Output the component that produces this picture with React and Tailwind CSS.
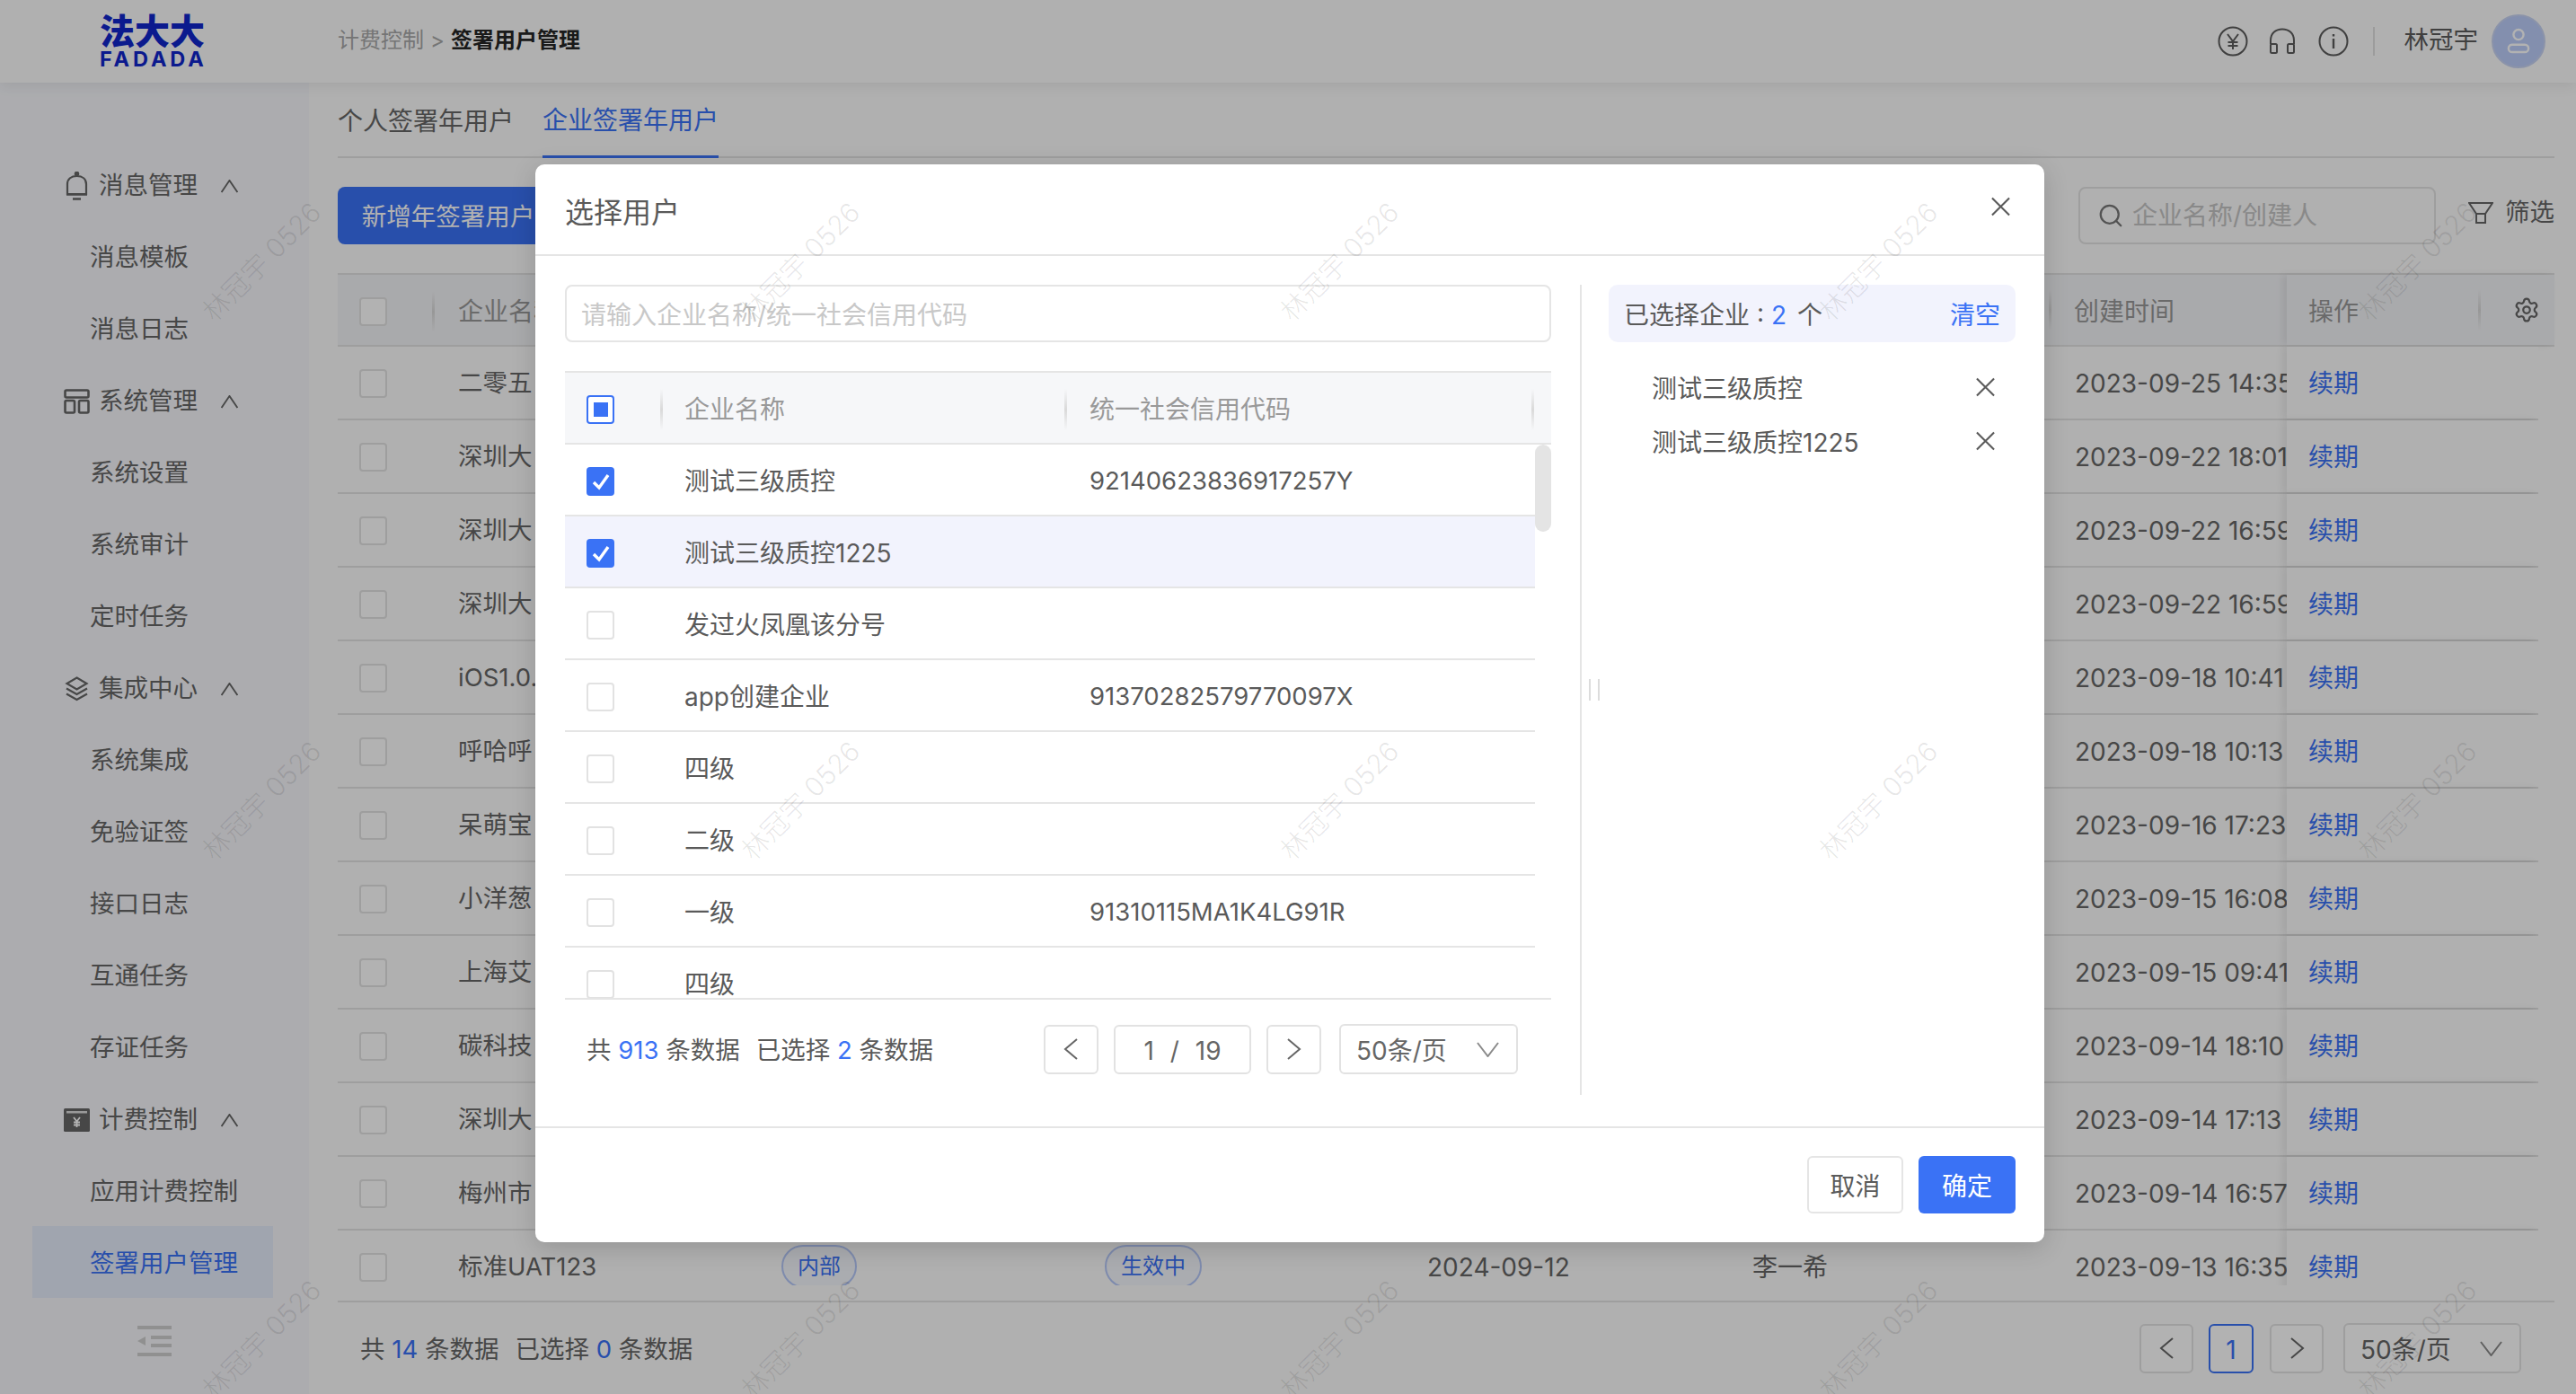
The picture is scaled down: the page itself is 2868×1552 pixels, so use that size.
import { Search, Settings } from "lucide-react";

const menu = [
  { label: "消息管理", icon: "bell", children: ["消息模板", "消息日志"] },
  { label: "系统管理", icon: "system", children: ["系统设置", "系统审计", "定时任务"] },
  { label: "集成中心", icon: "layers", children: ["系统集成", "免验证签", "接口日志", "互通任务", "存证任务"] },
  { label: "计费控制", icon: "bill", children: ["应用计费控制", "签署用户管理"] },
];

const rows = [
  { name: "二零五", time: "2023-09-25 14:35" },
  { name: "深圳大", time: "2023-09-22 18:01" },
  { name: "深圳大", time: "2023-09-22 16:59" },
  { name: "深圳大", time: "2023-09-22 16:59" },
  { name: "iOS1.0.", time: "2023-09-18 10:41" },
  { name: "呼哈呼", time: "2023-09-18 10:13" },
  { name: "呆萌宝", time: "2023-09-16 17:23" },
  { name: "小洋葱", time: "2023-09-15 16:08" },
  { name: "上海艾", time: "2023-09-15 09:41" },
  { name: "碳科技", time: "2023-09-14 18:10" },
  { name: "深圳大", time: "2023-09-14 17:13" },
  { name: "梅州市", time: "2023-09-14 16:57" },
  { name: "标准UAT123", type: "内部", status: "生效中", date: "2024-09-12", owner: "李一希", time: "2023-09-13 16:35" },
];

const companies = [
  { name: "测试三级质控", code: "92140623836917257Y", checked: true },
  { name: "测试三级质控1225", code: "", checked: true, active: true },
  { name: "发过火凤凰该分号", code: "" },
  { name: "app创建企业", code: "91370282579770097X" },
  { name: "四级", code: "" },
  { name: "二级", code: "" },
  { name: "一级", code: "91310115MA1K4LG91R" },
  { name: "四级", code: "" },
];

const watermarks = Array.from({ length: 15 }, (_, i) => i);

function MenuIcon({ type }) {
  if (type === "bell") {
    return (
      <svg viewBox="0 0 29 32" className="w-[29px] h-[32px]" fill="none" stroke="#666" strokeWidth="2.4">
        <circle cx="14.5" cy="2.5" r="1.6" fill="#666" />
        <path d="M4 25V14c0-6 4.5-9 10.500-9S25 8 25 14v11z" strokeWidth="2.2" />
        <path d="M3 25.500h23M10 30.500h9" />
      </svg>
    );
  }
  if (type === "system") {
    return (
      <svg viewBox="0 0 29 28" className="w-[29px] h-[28px]" fill="none" stroke="#666" strokeWidth="2.6">
        <rect x="1.500" y="1.500" width="26" height="8" rx="1.500" />
        <rect x="1.500" y="13" width="10.500" height="13.500" rx="1.500" />
        <rect x="17" y="13" width="10.500" height="13.500" rx="1.500" />
      </svg>
    );
  }
  if (type === "layers") {
    return (
      <svg viewBox="0 0 29 28" className="w-[29px] h-[28px]" fill="none" stroke="#666" strokeWidth="2.2">
        <path d="M14.500 1.500 25.500 8l-11 6.500L3.500 8z" />
        <path d="M3 13.500 14.500 20 26 13.500M3 19.500 14.500 26 26 19.500" />
      </svg>
    );
  }
  return (
    <svg viewBox="0 0 29 26" className="w-[29px] h-[26px]">
      <rect width="29" height="26" rx="1.500" fill="#666" />
      <rect x="3" y="3" width="23" height="2.500" fill="#ddd" />
      <path d="M11 10l3.500 4.500L18 10M14.500 14.500V21M11 15.500h7M11 18.500h7" fill="none" stroke="#fff" strokeWidth="1.800" />
    </svg>
  );
}

function Chevron({ dir, className }) {
  const paths = {
    up: "M1 15 10.500 1 20 15",
    down: "M1 1 12.500 16 24 1",
    left: "M15 1 2 12l13 11",
    right: "M2 1l13 11L2 23",
  };
  const size = { up: "0 0 21 16", down: "0 0 25 17", left: "0 0 17 24", right: "0 0 17 24" };
  return (
    <svg viewBox={size[dir]} className={className} fill="none" stroke="currentColor" strokeWidth="2">
      <path d={paths[dir]} />
    </svg>
  );
}

function CloseX({ className }) {
  return (
    <svg viewBox="0 0 22 22" className={className} fill="none" stroke="currentColor" strokeWidth="2.2">
      <path d="M1 1l20 20M21 1 1 21" />
    </svg>
  );
}

function Checkbox({ state }) {
  if (state === "checked") {
    return (
      <span className="flex w-[31px] h-[32px] items-center justify-center rounded-[4px] bg-[#3a72f5]">
        <svg viewBox="0 0 20 20" className="w-[20px] h-[20px]" fill="none" stroke="#fff" strokeWidth="3.400">
          <path d="M2 11l6 6L18 3" />
        </svg>
      </span>
    );
  }
  if (state === "half") {
    return (
      <span className="flex w-[31px] h-[32px] items-center justify-center rounded-[4px] border-2 border-[#3a72f5] bg-white">
        <span className="w-[16px] h-[16px] bg-[#3a72f5]" />
      </span>
    );
  }
  return <span className="block w-[31px] h-[32px] rounded-[4px] border-2 border-[#e2e2e2] bg-white" />;
}

function HeadDivider() {
  return <span className="w-[3px] h-[46px] bg-linear-to-b from-transparent via-[#d9d9d9] to-transparent" />;
}

function Sidebar() {
  return (
    <aside className="flex w-[344px] flex-col bg-[#f6f7fb] pt-[73px] text-[27.5px]">
      <div className="flex w-[268px] flex-col ml-[36px] text-[#666]">
        {menu.map((group) => (
          <div key={group.label}>
            <div className="flex h-[80px] items-center pl-[35px] pt-[4px]">
              <span className="flex w-[29px] justify-center mr-[10px]">
                <MenuIcon type={group.icon} />
              </span>
              <span>{group.label}</span>
              <Chevron dir="up" className="w-[21px] h-[15px] ml-[25px]" />
            </div>
            {group.children.map((child) => (
              <div
                key={child}
                className={`flex h-[80px] items-center pl-[64px] pt-[4px] ${
                  child === "签署用户管理" ? "bg-[#e6ecfb] text-[#3a72f5]" : ""
                }`}
              >
                {child}
              </div>
            ))}
          </div>
        ))}
      </div>
      <div className="flex justify-center mt-[31px]">
        <svg viewBox="0 0 38 34" className="w-[38px] h-[34px]" fill="#cfcfcf">
          <rect width="38" height="4" />
          <rect x="15" y="11" width="23" height="4" />
          <rect x="15" y="20" width="23" height="4" />
          <rect y="30" width="38" height="4" />
          <path d="M9 12v10l-9-5z" />
        </svg>
      </div>
    </aside>
  );
}

function TopBar() {
  return (
    <header className="relative z-10 flex h-[92px] items-center bg-[#fcfcfc] shadow-[0_4px_14px_rgba(0,0,0,0.07)]">
      <div className="flex w-[376px] flex-col pl-[111px] text-[#1026cc]">
        <span className="text-[39px] leading-[36px] font-black">法大大</span>
        <span className="mt-[4px] text-[23.5px] leading-[18px] font-bold tracking-[3.9px]">FADADA</span>
      </div>
      <div className="flex flex-1 items-center gap-[7px] pb-[3px] text-[24px]">
        <span className="text-[#a8a8a8]">计费控制</span>
        <span className="text-[#a8a8a8]">&gt;</span>
        <span className="font-bold text-[#262626]">签署用户管理</span>
      </div>
      <div className="flex items-center pr-[34px] text-[#5c5c5c]">
        <svg viewBox="0 0 34 34" className="w-[34px] h-[34px]" fill="none" stroke="#5c5c5c" strokeWidth="2">
          <circle cx="17" cy="17" r="15.500" />
          <path d="M11 9l6 8 6-8M17 17v9M11.500 18h11M11.500 22h11" />
        </svg>
        <svg viewBox="0 0 30 30" className="w-[30px] h-[30px] ml-[23px]" fill="none" stroke="#5c5c5c" strokeWidth="2">
          <path d="M2 18v-4C2 6 7.500 1.500 15 1.500S28 6 28 14v4" />
          <rect x="2" y="18" width="7" height="10" rx="1.500" />
          <rect x="21" y="18" width="7" height="10" rx="1.500" />
        </svg>
        <svg viewBox="0 0 34 34" className="w-[34px] h-[34px] ml-[25px]" fill="none" stroke="#5c5c5c" strokeWidth="2">
          <circle cx="17" cy="17" r="15.500" />
          <path d="M17 14v11M17 9v2.500" strokeWidth="2.400" />
        </svg>
        <span className="w-[2px] h-[32px] bg-[#e0e0e0] ml-[27px] mr-[33px]" />
        <span className="pb-[3px] text-[27.5px] text-[#5c5c5c]">林冠宇</span>
        <span className="flex w-[60px] h-[60px] items-center justify-center rounded-full bg-[#bccdfa] border-2 border-[#c7d3f3] ml-[15px]">
          <svg viewBox="0 0 28 32" className="w-[26px] h-[30px]" fill="none" stroke="#fff" strokeWidth="2.600">
            <circle cx="14" cy="8" r="6" />
            <rect x="2" y="20" width="24" height="9" rx="4.500" />
          </svg>
        </span>
      </div>
    </header>
  );
}

function PagerButton({ children, className = "" }) {
  return (
    <span
      className={`flex h-[55px] items-center justify-center rounded-[6px] border-2 border-[#e2e2e2] bg-white text-[#666] ${className}`}
    >
      {children}
    </span>
  );
}

function PageSize({ width }) {
  return (
    <span className={`flex h-[56px] ${width} items-center justify-between rounded-[6px] border-2 border-[#e2e2e2] bg-white pl-[17px] pr-[19px] text-[#666]`}>
      <span className="pt-[3px]">50条/页</span>
      <Chevron dir="down" className="w-[25px] h-[17px] text-[#8a8a8a]" />
    </span>
  );
}

function Summary({ total, selected }) {
  return (
    <div className="whitespace-pre pt-[4px] text-[27.5px]">
      共 <span className="text-[#3a72f5]">{total}</span> 条数据<span className="ml-[18px]">已选择 </span>
      <span className="text-[#3a72f5]">{selected}</span> 条数据
    </div>
  );
}

function MainTable() {
  return (
    <>
      <div className="flex h-[82px] items-center border-y-2 border-[#e2e2e2] bg-[#f3f4f7] text-[#999]">
        <div className="flex w-[108px] items-center justify-between pl-[24px] pt-[4px]">
          <Checkbox />
          <HeadDivider />
        </div>
        <div className="flex-1 pl-[26px] pt-[4px]">企业名称</div>
        <HeadDivider />
        <div className="w-[262px] pl-[25px] pt-[4px]">创建时间</div>
        <div className="flex w-[298px] self-stretch items-center bg-[#f3f4f7] pl-[24px] shadow-[-5px_0_8px_rgba(0,0,0,0.07)]">
          <span className="w-[189px] pt-[4px]">操作</span>
          <HeadDivider />
          <Settings className="ml-[36px] w-[30px] h-[30px] text-[#666]" strokeWidth={1.8} />
        </div>
      </div>
      <div className="h-[1064px] border-b-2 border-[#e2e2e2]">
        <div className="h-[1045px] w-[2450px] overflow-hidden text-[#666]">
          {rows.map((row, i) => (
            <div key={i} className="flex h-[82px] items-center border-b-2 border-[#e2e2e2]">
              <div className="w-[108px] pl-[24px] pt-[2px]">
                <Checkbox />
              </div>
              <div className="w-[359px] pl-[26px] pt-[2px] text-[27.5px]">{row.name}</div>
              <div className="w-[360px] pl-[27px]">
                {row.type && (
                  <span className="flex h-[48px] w-[84px] items-center justify-center rounded-full border-2 border-[#b5c8f8] bg-[#f4f6fd] text-[24px] text-[#3a72f5]">
                    {row.type}
                  </span>
                )}
              </div>
              <div className="w-[359px] pl-[27px]">
                {row.status && (
                  <span className="flex h-[48px] w-[108px] items-center justify-center rounded-full border-2 border-[#b5c8f8] bg-[#f4f6fd] text-[24px] text-[#3a72f5]">
                    {row.status}
                  </span>
                )}
              </div>
              <div className="w-[362px] pl-[27px] pt-[2px]">{row.date}</div>
              <div className="w-[360px] pl-[27px] pt-[2px]">{row.owner}</div>
              <div className="w-[262px] overflow-hidden whitespace-nowrap pl-[26px] pt-[2px]">{row.time}</div>
              <div className="flex h-[80px] w-[280px] self-start items-center bg-[#fcfcfc] pl-[24px] pt-[2px] text-[#3a72f5] shadow-[-5px_0_8px_rgba(0,0,0,0.07)]">
                续期
              </div>
            </div>
          ))}
        </div>
      </div>
    </>
  );
}

function MainContent() {
  return (
    <main className="flex w-[2468px] flex-col ml-[32px]">
      <div className="flex h-[84px] gap-[32px] border-b-2 border-[#e2e2e2]">
        <span className="flex h-[84px] items-center text-[#666] pt-[2px]">个人签署年用户</span>
        <span className="flex h-[84px] items-center border-b-[3px] border-[#3a72f5] text-[#3a72f5] pt-[2px]">企业签署年用户</span>
      </div>
      <div className="flex h-[64px] items-center mt-[32px] mb-[32px]">
        <span className="flex h-[64px] w-[246px] items-center justify-center rounded-[8px] bg-[#3a72f5] pt-[4px] text-[27.5px] text-white">
          新增年签署用户
        </span>
        <div className="flex-1" />
        <div className="flex h-[64px] w-[398px] items-center rounded-[8px] border-2 border-[#e2e2e2] pl-[19px]">
          <Search className="w-[30px] h-[30px] text-[#777]" strokeWidth={1.8} />
          <span className="ml-[9px] text-[#c4c4c4]">企业名称/创建人</span>
        </div>
        <svg viewBox="0 0 28 24" className="w-[28px] h-[24px] ml-[36px] mb-[6px]" fill="none" stroke="#666" strokeWidth="2">
          <path d="M1 1h26L19 13H9z" />
          <path d="M9 13h10v10H9z" />
        </svg>
        <span className="ml-[13px] mb-[6px] w-[55px] whitespace-nowrap text-[27.5px] text-[#666]">筛选</span>
      </div>
      <MainTable />
      <div className="flex flex-1 items-center justify-between pl-[25px] pr-[37px] text-[#666]">
        <Summary total="14" selected="0" />
        <div className="flex items-center">
          <PagerButton className="w-[60px]">
            <Chevron dir="left" className="w-[17px] h-[24px]" />
          </PagerButton>
          <span className="flex h-[55px] w-[50px] items-center justify-center rounded-[6px] border-2 border-[#3a72f5] bg-white pt-[3px] text-[#3a72f5] ml-[17px]">
            1
          </span>
          <PagerButton className="w-[60px] ml-[18px]">
            <Chevron dir="right" className="w-[17px] h-[24px]" />
          </PagerButton>
          <span className="ml-[22px]">
            <PageSize width="w-[198px]" />
          </span>
        </div>
      </div>
    </main>
  );
}

function SelectUserModal() {
  return (
    <div className="absolute left-[596px] top-[183px] flex h-[1200px] w-[1680px] flex-col rounded-[10px] bg-white text-[#5a5a5a] shadow-[0_6px_28px_rgba(0,0,0,0.16)]">
      <div className="flex h-[102px] shrink-0 items-center justify-between border-b-2 border-[#e5e5e5] pl-[33px] pr-[38px]">
        <span className="pt-[8px] text-[32px]">选择用户</span>
        <CloseX className="w-[21px] h-[22px] mb-[6px]" />
      </div>

      <div className="flex h-[969px] shrink-0 pt-[32px]">
        {/* left pane */}
        <div className="flex w-[1098px] flex-col ml-[33px]">
          <div className="flex h-[64px] items-center rounded-[8px] border-2 border-[#e5e5e5] pl-[16px] pt-[4px] text-[#c8c8c8]">
            请输入企业名称/统一社会信用代码
          </div>
          <div className="flex h-[82px] items-center border-y-2 border-[#e5e5e5] bg-[#f6f7f9] text-[#999] mt-[32px]">
            <div className="flex w-[109px] items-center justify-between pl-[24px] pt-[4px]">
              <Checkbox state="half" />
              <HeadDivider />
            </div>
            <div className="w-[450px] pl-[24px] pt-[4px] flex items-center justify-between">
              企业名称
              <HeadDivider />
            </div>
            <div className="flex w-[520px] items-center justify-between pl-[25px] pt-[4px]">
              统一社会信用代码
              <HeadDivider />
            </div>
          </div>
          <div className="flex h-[618px] border-b-2 border-[#e5e5e5]">
            <div className="w-[1080px] overflow-hidden">
              {companies.map((item, i) => (
                <div
                  key={i}
                  className={`flex h-[80px] shrink-0 items-center border-b-2 border-[#e5e5e5] ${
                    item.active ? "bg-[#f2f3fd]" : ""
                  }`}
                >
                  <div className="w-[133px] pl-[24px] pt-[4px]">
                    <Checkbox state={item.checked ? "checked" : undefined} />
                  </div>
                  <div className="w-[451px] pt-[4px]">{item.name}</div>
                  <div className="pt-[4px] text-[27.5px]">{item.code}</div>
                </div>
              ))}
            </div>
            <div className="w-[18px]">
              <div className="h-[97px] rounded-full bg-[#e4e4e4]" />
            </div>
          </div>
          <div className="flex items-center justify-between pl-[24px] pr-[37px] mt-[27px]">
            <Summary total="913" selected="2" />
            <div className="flex items-center">
              <PagerButton className="w-[61px]">
                <Chevron dir="left" className="w-[17px] h-[24px]" />
              </PagerButton>
              <PagerButton className="w-[153px] ml-[17px] gap-[18px] pt-[3px]">
                <span>1</span>
                <span>/</span>
                <span>19</span>
              </PagerButton>
              <PagerButton className="w-[61px] ml-[17px]">
                <Chevron dir="right" className="w-[17px] h-[24px]" />
              </PagerButton>
              <span className="ml-[20px]">
                <PageSize width="w-[199px]" />
              </span>
            </div>
          </div>
        </div>

        {/* splitter */}
        <div className="relative ml-[32px] w-[2px] h-[902px] bg-[#e5e5e5]">
          <div className="absolute left-[10px] top-[439px] flex gap-[8px]">
            <span className="w-[2px] h-[24px] bg-[#dcdcdc]" />
            <span className="w-[2px] h-[24px] bg-[#dcdcdc]" />
          </div>
        </div>

        {/* right pane */}
        <div className="flex w-[453px] flex-col ml-[30px]">
          <div className="flex h-[64px] items-center justify-between rounded-[10px] bg-[#f2f3fd] pl-[17px] pr-[17px] pt-[4px]">
            <span className="whitespace-pre">
              已选择企业<span className="ml-[8px]">:</span> <span className="text-[#3a72f5]">2</span> <span className="ml-[4px]">个</span>
            </span>
            <span className="text-[#3a72f5]">清空</span>
          </div>
          <div className="flex flex-col mt-[20px]">
            {["测试三级质控", "测试三级质控1225"].map((name) => (
              <div key={name} className="flex h-[60px] items-center justify-between pl-[48px] pr-[23px]">
                <span className="pt-[4px]">{name}</span>
                <CloseX className="w-[21px] h-[22px]" />
              </div>
            ))}
          </div>
        </div>
      </div>

      <div className="flex flex-1 items-start justify-end gap-[17px] border-t-2 border-[#e5e5e5] pt-[31px] pr-[32px]">
        <span className="flex h-[64px] w-[107px] items-center justify-center rounded-[6px] border-2 border-[#e5e5e5] pt-[4px]">取消</span>
        <span className="flex h-[64px] w-[108px] items-center justify-center rounded-[6px] bg-[#3a72f5] pt-[4px] text-white">确定</span>
      </div>
    </div>
  );
}

export default function App() {
  return (
    <div className="relative h-[1552px] w-[2868px] overflow-hidden bg-[#fcfcfc] text-[28px] font-['Inter','Noto_Sans_CJK_SC',sans-serif]">
      <TopBar />
      <div className="flex h-[1460px]">
        <Sidebar />
        <MainContent />
      </div>

      {/* dialog mask */}
      <div className="absolute inset-0 z-20 bg-black/30">
        <SelectUserModal />
      </div>

      {/* watermark */}
      <div className="pointer-events-none absolute left-[-8px] top-[-9px] z-30 grid grid-cols-[repeat(5,600px)] auto-rows-[600px]">
        {watermarks.map((i) => (
          <div key={i} className="flex items-center justify-center">
            <span className="-rotate-45 whitespace-nowrap text-[30px] font-light text-black/10">林冠宇 0526</span>
          </div>
        ))}
      </div>
    </div>
  );
}
